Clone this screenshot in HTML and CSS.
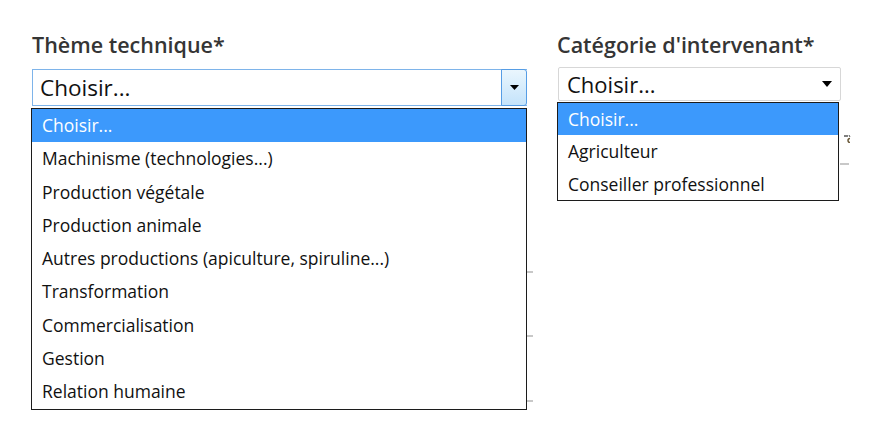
FILE: index.html
```html
<!DOCTYPE html>
<html lang="fr">
<head>
<meta charset="utf-8">
<link rel="stylesheet" href="styles.css">
</head>
<body>
<div class="form">
  <div class="field field-theme">
    <div class="label">Thème technique*</div>
    <div class="select select-focus">
      <span class="value">Choisir...</span>
      <span class="btn"><svg width="9" height="5" viewBox="0 0 9 5"><path d="M0 0H9L4.5 5Z" fill="#000"/></svg></span>
    </div>
    <ul class="list">
      <li class="on">Choisir...</li>
      <li>Machinisme (technologies...)</li>
      <li>Production végétale</li>
      <li>Production animale</li>
      <li>Autres productions (apiculture, spiruline...)</li>
      <li>Transformation</li>
      <li>Commercialisation</li>
      <li>Gestion</li>
      <li>Relation humaine</li>
    </ul>
    <span class="tick t1"></span>
    <span class="tick t2"></span>
    <span class="tick t3"></span>
  </div>
  <div class="field field-cat">
    <div class="label">Catégorie d'intervenant*</div>
    <div class="select select-plain">
      <span class="value">Choisir...</span>
      <span class="arrow"><svg width="10" height="6" viewBox="0 0 10 6"><path d="M0 0H10L5 6Z" fill="#000"/></svg></span>
    </div>
    <ul class="list list-small">
      <li class="on">Choisir...</li>
      <li>Agriculteur</li>
      <li>Conseiller professionnel</li>
    </ul>
    <svg class="frag" width="8" height="8" viewBox="0 0 8 8"><path d="M0 1H4" stroke="#555" stroke-width="1.5"/><path d="M5 0L6 2" stroke="#555" stroke-width="1"/><path d="M6 3.5A2 2 0 1 0 6 7.5" stroke="#6b5a3a" stroke-width="1.5" fill="none"/></svg>
    <span class="tick t4"></span>
  </div>
</div>
</body>
</html>
```

FILE: styles.css
```css
* { box-sizing: border-box; }
html, body { margin: 0; padding: 0; background: #fff; }
body { font-family: "Open Sans", "Noto Sans", sans-serif; color: #000; }

.form {
  display: flex;
  padding: 30px 0 0 31px;
  gap: 30px;
}
.field { position: relative; display: flex; flex-direction: column; }
.field-theme { width: 496px; }
.field-cat { width: 283px; }

.label {
  font-size: 21.5px;
  font-weight: 600;
  color: #353535;
  line-height: 30px;
  height: 39px;
  padding-left: 1px;
}
.field-cat .label { padding-left: 0; }

.select {
  display: flex;
  align-items: center;
  background: #fff;
}
.select .value { flex: 1; font-size: 22.5px; color: #111; }

.select-focus {
  height: 37px;
  border: 1px solid #7eb4ea;
  border-right: none;
  margin-left: 1px;
  padding-left: 7px;
}
.select-focus .btn {
  width: 26px;
  height: 37px;
  margin-top: -1px;
  margin-bottom: -1px;
  border: 1px solid #569de5;
  border-radius: 0 3px 3px 0;
  background: linear-gradient(#eaf6fd, #c4e3fb);
  display: flex;
  align-items: center;
  justify-content: center;
}

.select-plain {
  height: 34px;
  width: 283px;
  margin-top: -2px;
  margin-left: 1px;
  border: 1px solid #d7d7d7;
  border-radius: 2px;
  padding: 0 8px 0 8px;
}
.select-plain .value { font-size: 22px; }
.select-plain .arrow { display: flex; align-items: center; }

.list {
  list-style: none;
  margin: 2px 0 0 0;
  padding: 0;
  border: 1px solid #1c1c1c;
  background: #fff;
  font-size: 17.5px;
}
.list li {
  height: 33.3px;
  line-height: 33.3px;
  padding-left: 10px;
  color: #111;
  white-space: nowrap;
}
.list li.on { background: #3c99fc; color: #fff; }
.list-small { margin-top: 1px; width: 282px; }
.list-small li { height: 32.3px; line-height: 32.3px; }

.tick {
  position: absolute;
  height: 2px;
  width: 6px;
  background: #c8c8c8;
}
.t1 { left: 496px; top: 241px; }
.t2 { left: 496px; top: 305px; }
.t3 { left: 496px; top: 370px; }
.t4 { left: 283px; top: 133px; width: 9px; }
.frag {
  position: absolute;
  left: 287px;
  top: 105px;
}
```
